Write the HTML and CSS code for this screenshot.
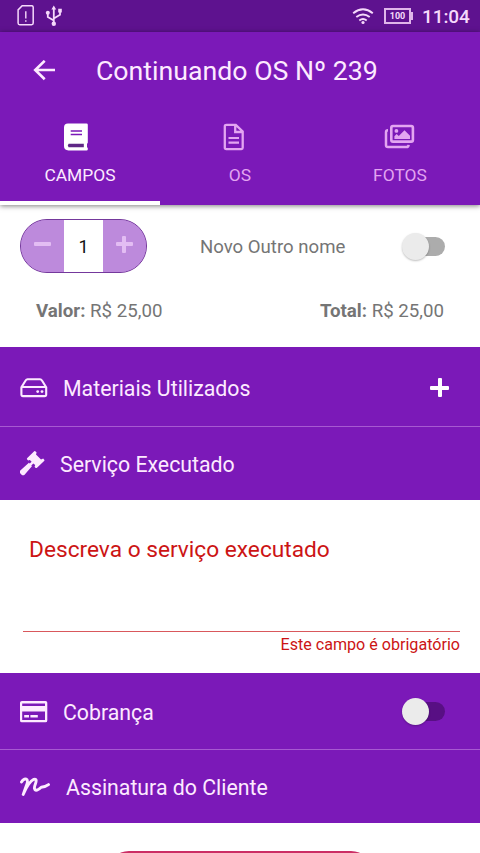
FILE: index.html
```html
<!DOCTYPE html>
<html lang="pt-BR">
<head>
<meta charset="utf-8">
<title>Continuando OS Nº 239</title>
<link rel="stylesheet" href="styles.css">
</head>
<body>
<div class="status">
  <svg class="sim" width="18" height="22" viewBox="0 0 18 22"><path d="M5.2 .7H14.6Q16.2 .7 16.2 2.3V18.1Q16.2 19.7 14.6 19.7H2.7Q1.1 19.7 1.1 18.1V4.9Z" fill="none" stroke="currentColor" stroke-width="1.5"/><path d="M8.8 6.2V13.4M8.8 15.2V16.8" stroke="currentColor" stroke-width="1.4"/></svg>
  <svg class="usb" width="18" height="22" viewBox="0 0 18 22"><path d="M8.8 3V18M8.8 15.6L2.8 12V8.5M8.8 13.5L15 9.8V6" fill="none" stroke="currentColor" stroke-width="1.8"/><path d="M8.8 .4L11.2 4.6H6.4ZM13.2 3.8H16.8V7.6H13.2Z" fill="currentColor"/><circle cx="2.8" cy="7.8" r="2" fill="currentColor"/><circle cx="8.8" cy="18.8" r="2.2" fill="currentColor"/></svg>
  <svg class="wifi" width="22" height="17" viewBox="0 0 22 17"><path d="M1.2 5.3Q11 -2.6 20.8 5.3M4.3 9Q11 3.8 17.7 9M7.3 12.4Q11 9.6 14.7 12.4" fill="none" stroke="currentColor" stroke-width="1.9"/><circle cx="11" cy="14.5" r="1.6" fill="currentColor"/></svg>
  <div class="battery">100</div>
  <div class="clock">11:04</div>
</div>
<header class="top">
  <div class="bar">
    <svg class="back" width="24" height="22" viewBox="0 0 24 22"><path d="M23 10H3.5M12.7 .8L3.2 10L12.7 19.2" fill="none" stroke="currentColor" stroke-width="2.6"/></svg>
    <h1>Continuando OS Nº 239</h1>
  </div>
  <nav class="tabs">
    <div class="tab active">
      <svg width="32" height="28" viewBox="0 0 32 28"><path d="M8 .5H26.5Q27.8 .5 27.8 1.8V19.5Q27.8 20.3 27 20.8V24.2Q27.8 24.5 27.8 25.3V26.2Q27.8 27.4 26.5 27.4H8.5Q4 27.4 4 23V4.5Q4 .5 8 .5Z" fill="currentColor"/><path d="M10.7 8H22M10.7 11.5H22" stroke="#7b19b8" stroke-width="1.3"/><path d="M8.6 20.8H23.8V24.2H8.6Q6.9 22.5 8.6 20.8Z" fill="#5f2886"/></svg>
      <span>CAMPOS</span>
    </div>
    <div class="tab os">
      <svg width="32" height="28" viewBox="0 0 32 28"><path d="M8.5 1.8H17.8L24.7 8.5V24.8Q24.7 26.1 23.4 26.1H8.3Q6.8 26.1 6.8 24.8V3.2Q6.8 1.8 8.5 1.8ZM17.2 2V9H24.5" fill="none" stroke="currentColor" stroke-width="2.3"/><path d="M10.5 15H21M10.5 19.7H21" stroke="currentColor" stroke-width="2.2"/></svg>
      <span>OS</span>
    </div>
    <div class="tab">
      <svg width="32" height="28" viewBox="0 0 32 28"><rect x="7.3" y="3" width="21.6" height="15.6" rx="1.7" fill="none" stroke="currentColor" stroke-width="2.6"/><path d="M4 7.3Q2 7.3 2 9.3V22.2Q2 24 4 24H22.5Q24.4 24 24.6 21.8" fill="none" stroke="currentColor" stroke-width="2.5"/><circle cx="12.4" cy="7.9" r="1.9" fill="currentColor"/><path d="M10.4 16V13.2L12.6 11L14.8 13L20.5 7.3L26 12.8V16Z" fill="currentColor"/></svg>
      <span>FOTOS</span>
    </div>
  </nav>
</header>
<main>
  <section class="service">
    <div class="service-row">
      <div class="stepper"><button class="minus" aria-label="-"></button><span class="count">1</span><button class="plus" aria-label="+"></button></div>
      <span class="name">Novo Outro nome</span>
      <div class="switch"><i class="knob"></i></div>
    </div>
    <div class="prices"><span class="valor"><b>Valor:</b> R$ 25,00</span><span class="total"><b>Total:</b> R$ 25,00</span></div>
  </section>
  <div class="head materials">
    <svg width="28" height="20" viewBox="0 0 28 20"><path d="M1.4 9.2L5.8 2.3Q6.4 1.3 7.5 1.3H20Q21.2 1.3 21.8 2.3L26.2 9.2V16.5Q26.2 18.1 24.6 18.1H3Q1.4 18.1 1.4 16.5ZM1.4 9H26.2" fill="none" stroke="currentColor" stroke-width="2.1"/><circle cx="17.7" cy="13.6" r="1.4" fill="currentColor"/><circle cx="22" cy="13.6" r="1.4" fill="currentColor"/></svg>
    <span>Materiais Utilizados</span>
    <i class="add"></i>
  </div>
  <div class="head executed">
    <svg width="26" height="26" viewBox="0 0 26 26"><path d="M14.8 .8Q15.5 .2 16.2 1L17.2 2L16.6 4.2L21.6 9L23.8 8.2L24.8 9.3Q25.5 10 24.7 10.7L17.6 17.4Q16.8 18 16 17.3L15.2 16.4L15.8 14.5L13.9 13L11.9 15L12.5 15.8L5.2 24.3Q3.7 25.6 2.2 24.3L.8 22.8Q-.2 21.2 1.2 19.9L9.5 12.4L10.4 13.2L12.2 11.3L10.5 9.6L8.7 10.1L7.8 9.2Q7.1 8.4 7.9 7.7Z" fill="currentColor" transform="translate(-.6 .4)"/></svg>
    <span>Serviço Executado</span>
  </div>
  <section class="form">
    <div class="field">Descreva o serviço executado</div>
    <div class="error">Este campo é obrigatório</div>
  </section>
  <div class="head billing">
    <svg width="28" height="22" viewBox="0 0 28 22"><path fill-rule="evenodd" d="M2 0H25.5Q27.3 0 27.3 1.8V19.4Q27.3 21.3 25.5 21.3H1.9Q0 21.3 0 19.4V1.8Q0 0 2 0ZM2.2 2.6V4.9H25V2.6ZM2.2 10.6V18.9H25V10.6Z" fill="currentColor"/><path d="M4.2 15.2H9M10.4 15.2H17.8" stroke="currentColor" stroke-width="2.4"/></svg>
    <span>Cobrança</span>
    <div class="switch dark"><i class="knob"></i></div>
  </div>
  <div class="head signature">
    <svg width="31" height="20" viewBox="0 0 31 20"><path d="M1.5 5Q3.8 1.4 6.3 2.2Q8.6 3.2 6.2 9L3.2 17.4Q8.7 4.8 13.8 2.3Q17.6 1.2 15.3 7.3Q13.2 12.8 16.1 13.2Q18 13.2 21.2 10.2Q25.5 9.9 28.5 7.6" fill="none" stroke="currentColor" stroke-width="2.9" stroke-linecap="round" stroke-linejoin="round"/></svg>
    <span>Assinatura do Cliente</span>
  </div>
  <div class="footer"><button class="save" aria-label="Salvar"></button></div>
</main>
</body>
</html>
```
FILE: styles.css
```css
* { box-sizing: border-box; }
body {
  margin: 0;
  width: 480px;
  height: 853px;
  overflow: hidden;
  background: #fff;
  font-family: Roboto, "Liberation Sans", sans-serif;
  color: #757575;
}
svg { display: block; flex: none; }
button { border: 0; padding: 0; }
.status {
  height: 32px;
  background: #5e128f;
  color: #f6d9fb;
  display: flex;
  align-items: center;
  padding: 0 10px 0 17px;
}
.usb { margin-left: 10px; }
.wifi { margin-left: auto; }
.battery {
  position: relative;
  width: 27px;
  height: 16px;
  margin-left: 10px;
  border: 2px solid #e0b5ea;
  font-size: 9px;
  font-weight: 700;
  line-height: 12px;
  text-align: center;
}
.battery::after {
  content: "";
  position: absolute;
  right: -4px;
  top: 2px;
  width: 2px;
  height: 8px;
  background: #e0b5ea;
}
.clock { margin-left: 11px; font-size: 19px; font-weight: 500; width: 48px; white-space: nowrap; letter-spacing: -.1px; }
.top {
  position: relative;
  height: 173px;
  background: #7b19b8;
  color: #fdeaff;
  box-shadow: 0 1px 5px rgba(0, 0, 0, .5);
}
.bar { height: 77px; display: flex; align-items: center; padding-left: 32px; }
h1 { margin: 1px 0 0 40px; font-size: 26.7px; font-weight: 400; line-height: 32px; white-space: nowrap; }
.tabs { display: grid; grid-template-columns: repeat(3, 1fr); height: 96px; }
.tab {
  display: flex;
  flex-direction: column;
  align-items: center;
  padding-top: 14px;
  font-size: 17.4px;
  line-height: 22px;
  color: #e3a5f1;
}
.tab svg { margin-bottom: 13px; margin-right: 8px; }
.tab.os svg { margin-right: 12px; }
.tab:last-child svg { margin-right: 1px; }
.tab.active { color: #fdeaff; border-bottom: 4px solid #fff; }
.tab.active svg { color: #fff; }
.service { height: 142px; padding: 14px 36px 0 20px; }
.service-row { display: flex; align-items: center; height: 54px; font-size: 18.6px; }
.stepper {
  width: 127px;
  height: 54px;
  display: flex;
  border: 1px solid #74389c;
  border-radius: 27px;
  overflow: hidden;
  background: #bd8adc;
}
.stepper button { flex: 1; position: relative; background: #bd8adc; }
.count { width: 39px; background: #fff; color: #111; text-align: center; line-height: 54px; font-size: 18px; }
.minus::before, .plus::before, .plus::after, .add::before, .add::after {
  content: "";
  position: absolute;
  border-radius: 1px;
  background: #e3bdf3;
}
.minus::before, .plus::before { width: 17px; height: 4px; left: 13px; top: 22px; }
.plus::after { width: 4px; height: 17px; left: 19px; top: 16px; }
.name { margin-left: 53px; margin-top: 1px; white-space: nowrap; }
.switch { position: relative; width: 33px; height: 19px; margin-left: auto; margin-right: -1px; border-radius: 10px; background: #acacac; }
.knob {
  position: absolute;
  left: -10px;
  top: -4px;
  width: 27px;
  height: 27px;
  border-radius: 50%;
  background: #ebebeb;
  box-shadow: 0 1px 2px rgba(0, 0, 0, .25);
}
.switch.dark { background: #580f84; }
.prices { display: flex; justify-content: space-between; margin-top: 22px; padding-left: 16px; font-size: 18.7px; line-height: 32px; }
.head { display: flex; align-items: center; background: #7b19b8; color: #fdeaff; padding-left: 20px; font-size: 21.3px; white-space: nowrap; }
.head span { line-height: 28px; padding-top: 3px; }
.materials { height: 80px; padding-top: 1px; border-bottom: 1px solid #a759d1; }
.materials svg { margin-top: 1px; }
.materials span { margin-left: 15px; }
.add { position: relative; width: 19px; height: 19px; margin-left: auto; margin-right: 31px; }
.add::before { width: 19px; height: 4px; top: 8px; left: 0; background: #fff; }
.add::after { width: 4px; height: 19px; left: 8px; top: 0; background: #fff; }
.executed { height: 73px; padding-bottom: 1px; }
.executed span { margin-left: 14px; }
.form { height: 173px; padding: 35px 20px 0 23px; color: #cc1414; }
.field { height: 97px; padding-left: 6px; font-size: 22.7px; line-height: 30px; border-bottom: 1px solid #d9585c; }
.error { text-align: right; font-size: 16.1px; line-height: 25px; }
.billing { height: 77px; padding: 1px 36px 0 20px; border-bottom: 1px solid #a759d1; }
.billing span { margin-left: 15px; }
.signature { height: 73px; }
.signature span { margin-left: 15px; padding-top: 2px; }
.footer { height: 30px; padding: 28px 108px 0; overflow: hidden; }
.save { display: block; width: 264px; height: 50px; border-radius: 21px; background: #cc2e65; }
```
